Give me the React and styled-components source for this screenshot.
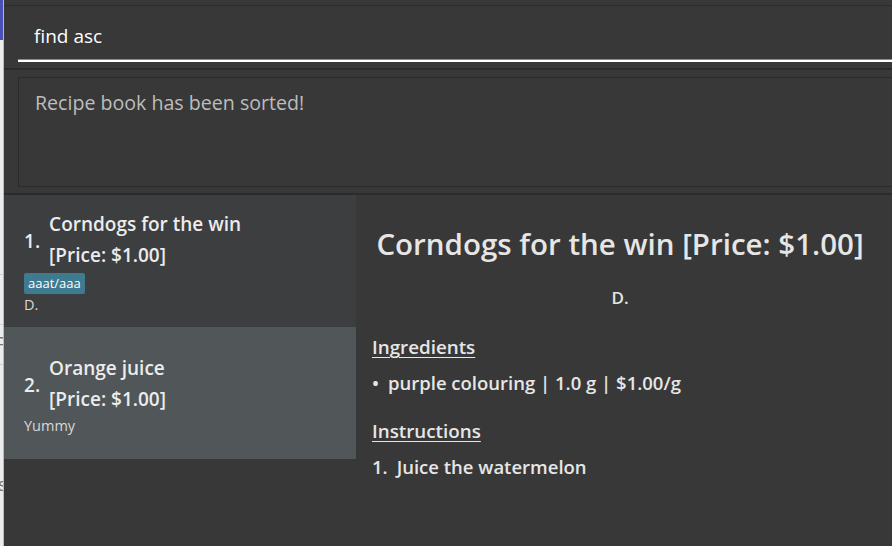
import styled, { createGlobalStyle } from "styled-components";

const GlobalStyle = createGlobalStyle`
  html, body {
    margin: 0;
    padding: 0;
    background: #383838;
    overflow: hidden;
  }
  * { box-sizing: border-box; }
`;

const recipes = [
  {
    name: "Corndogs for the win",
    price: "$1.00",
    tags: ["aaat/aaa"],
    desc: "D.",
  },
  {
    name: "Orange juice",
    price: "$1.00",
    tags: [],
    desc: "Yummy",
    selected: true,
  },
];

const Screen = styled.div`
  display: flex;
  width: 892px;
  height: 546px;
  font-family: "Open Sans", "Noto Sans", sans-serif;
`;

const Backdrop = styled.div`
  width: 4px;
  flex: none;
  display: flex;
  flex-direction: column;
  background: #ececec;
  border-right: 1px solid #b9b9b9;
  overflow: hidden;
`;

const BackdropTitle = styled.div`
  height: 40px;
  background: #4b50b6;
`;

const BackdropGlyph = styled.div`
  height: ${(p) => p.h}px;
  flex: none;
  display: flex;
  align-items: center;
  justify-content: flex-end;
  font-family: "Liberation Sans", sans-serif;
  font-size: 18px;
  color: ${(p) => p.color || "#777"};
  border-bottom: ${(p) => (p.line ? "1px solid #cfcfcf" : "none")};
  white-space: nowrap;
  & > span {
    margin-right: -4px;
  }
`;

const Window = styled.div`
  flex: 1;
  display: flex;
  flex-direction: column;
  background: #383838;
  min-width: 0;
`;

const TopBand = styled.div`
  height: 6px;
  flex: none;
  border-bottom: 1px solid #2c2c2c;
`;

const CommandArea = styled.div`
  height: 64px;
  flex: none;
  padding: 0 0 6px 14px;
  display: flex;
  align-items: flex-end;
  border-bottom: 2px solid #2b2b2b;
`;

const CommandField = styled.div`
  flex: 1;
  height: 50px;
  padding-left: 16px;
  display: flex;
  align-items: center;
  border-bottom: 2px solid #ffffff;
  box-shadow: 0 -1px 0 0 #8a8a8a inset;
  font-size: 19px;
  color: #ffffff;
`;

const ResultArea = styled.div`
  height: 125px;
  flex: none;
  padding: 7px 0 6px 14px;
  border-bottom: 2px solid #2b2b2b;
`;

const ResultBox = styled.div`
  height: 110px;
  border: 1px solid #2b2b2b;
  border-right: none;
  padding: 11px 16px;
  font-size: 19.6px;
  line-height: 27px;
  color: #bdbdbd;
`;

const Split = styled.div`
  flex: 1;
  display: flex;
  min-height: 0;
`;

const ListPanel = styled.div`
  width: 352px;
  flex: none;
  display: flex;
  flex-direction: column;
`;

const Card = styled.div`
  height: 132px;
  flex: none;
  padding: 2px 20px 0 20px;
  display: flex;
  flex-direction: column;
  justify-content: center;
  align-items: flex-start;
  background: ${(p) => (p.selected ? "#515658" : "#3c3e40")};
`;

const CardHead = styled.div`
  display: flex;
  align-items: center;
  gap: 9px;
  color: #ececec;
  font-weight: 600;
  font-size: 19px;
`;

const CardIndex = styled.div`
  padding-top: 2px;
`;

const CardLines = styled.div`
  display: flex;
  flex-direction: column;
  line-height: 31px;
`;

const Tags = styled.div`
  display: flex;
  gap: 4px;
  margin-top: 2px;
`;

const Tag = styled.span`
  background: #3e7b91;
  color: #ffffff;
  font-size: 13px;
  line-height: 19px;
  padding: 1px 4px 1px;
  border-radius: 2px;
`;

const Desc = styled.div`
  color: #d8d8d8;
  font-size: 14.5px;
  line-height: 20px;
  margin-top: 1px;
`;

const Detail = styled.div`
  flex: 1;
  padding: 29px 12px 0 16px;
  color: #e6e6e6;
`;

const DetailTitle = styled.div`
  text-align: center;
  font-size: 29.5px;
  line-height: 40px;
  font-weight: 600;
  padding-right: 12px;
`;

const DetailDesc = styled.div`
  text-align: center;
  font-size: 17px;
  line-height: 24px;
  font-weight: 600;
  margin-top: 22px;
  padding-right: 12px;
`;

const SectionHead = styled.div`
  font-size: 18.8px;
  line-height: 26px;
  font-weight: 600;
  text-decoration: underline;
  text-decoration-thickness: 1px;
  text-underline-offset: 3px;
  margin-top: ${(p) => p.gap}px;
`;

const Line = styled.div`
  display: flex;
  gap: 9px;
  font-size: 18.5px;
  line-height: 26px;
  font-weight: 600;
  margin-top: 10px;
`;

function RecipeCard({ recipe, index }) {
  return (
    <Card selected={recipe.selected}>
      <CardHead>
        <CardIndex>{index}.</CardIndex>
        <CardLines>
          <span>{recipe.name}</span>
          <span>[Price: {recipe.price}]</span>
        </CardLines>
      </CardHead>
      {recipe.tags.length > 0 && (
        <Tags>
          {recipe.tags.map((t) => (
            <Tag key={t}>{t}</Tag>
          ))}
        </Tags>
      )}
      <Desc>{recipe.desc}</Desc>
    </Card>
  );
}

export default function App() {
  return (
    <>
      <GlobalStyle />
      <Screen>
        <Backdrop>
          <BackdropTitle />
          <BackdropGlyph h={195} />
          <BackdropGlyph h={40} color="#b22020" line>
            <span>i</span>
          </BackdropGlyph>
          <BackdropGlyph h={50} line />
          <BackdropGlyph h={40} line>
            <span>F</span>
          </BackdropGlyph>
          <BackdropGlyph h={100} />
          <BackdropGlyph h={40}>
            <span>s</span>
          </BackdropGlyph>
        </Backdrop>
        <Window>
          <TopBand />
          <CommandArea>
            <CommandField>find asc</CommandField>
          </CommandArea>
          <ResultArea>
            <ResultBox>Recipe book has been sorted!</ResultBox>
          </ResultArea>
          <Split>
            <ListPanel>
              {recipes.map((r, i) => (
                <RecipeCard key={r.name} recipe={r} index={i + 1} />
              ))}
            </ListPanel>
            <Detail>
              <DetailTitle>Corndogs for the win [Price: $1.00]</DetailTitle>
              <DetailDesc>D.</DetailDesc>
              <SectionHead gap={24}>Ingredients</SectionHead>
              <Line>
                <span>•</span>
                <span>purple colouring | 1.0 g | $1.00/g</span>
              </Line>
              <SectionHead gap={22}>Instructions</SectionHead>
              <Line>
                <span>1.</span>
                <span>Juice the watermelon</span>
              </Line>
            </Detail>
          </Split>
        </Window>
      </Screen>
    </>
  );
}
